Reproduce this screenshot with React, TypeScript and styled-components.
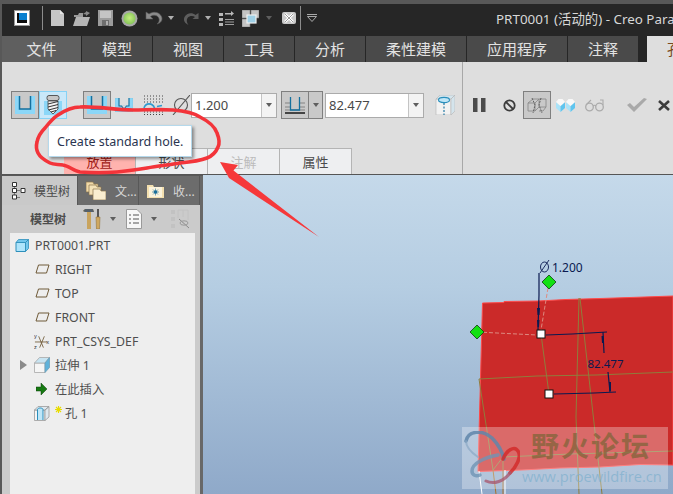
import React from "react";
import styled, { createGlobalStyle } from "styled-components";

const FONT = `"Noto Sans", "Noto Sans CJK SC", sans-serif`;

const GlobalStyle = createGlobalStyle`
  html, body {
    margin: 0;
    padding: 0;
    background: #555;
  }
  #root {
    width: 673px;
    height: 494px;
    overflow: hidden;
  }
`;

const Page = styled.div`
  position: relative;
  box-sizing: border-box;
  width: 673px;
  height: 494px;
  padding: 4px 0 0 2px;
  background: #585858;
  overflow: hidden;
  display: flex;
  flex-direction: column;
  font-family: ${FONT};
`;

const Slot = styled.span<{ $ml?: number }>`
  display: flex;
  align-items: center;
  flex-shrink: 0;
  margin-left: ${(p) => p.$ml ?? 0}px;
`;

const QuickBar = styled.div`
  box-sizing: border-box;
  height: 32px;
  flex-shrink: 0;
  display: flex;
  align-items: center;
  padding: 0 0 4px 12px;
  background: #262626;
`;

const BarSep = styled.span`
  width: 1px;
  height: 24px;
  background: #8c8c8c;
`;

const Title = styled.span`
  flex-shrink: 0;
  margin-left: 179px;
  font-size: 13.4px;
  color: #d8d8d8;
  white-space: nowrap;
`;

const TabBar = styled.div`
  height: 26px;
  flex-shrink: 0;
  display: flex;
  background: #262626;
`;

const MenuTab = styled.div<{ $w: number; $file?: boolean; $active?: boolean }>`
  width: ${(p) => p.$w}px;
  flex-shrink: 0;
  margin-right: 1px;
  overflow: hidden;
  white-space: nowrap;
  display: flex;
  align-items: center;
  justify-content: ${(p) => (p.$active ? "flex-start" : "center")};
  padding: 0 0 2px ${(p) => (p.$active ? 20 : 0)}px;
  box-sizing: border-box;
  font-size: 15px;
  color: ${(p) => (p.$active ? "#7a4a20" : "#e2e2e2")};
  background: ${(p) =>
    p.$active ? "#dedede" : p.$file ? "#5f5f5f" : "#4a4a4a"};
`;

const Ribbon = styled.div`
  height: 112px;
  flex-shrink: 0;
  display: flex;
  background: #dedede;
  border-bottom: 1px solid #555;
`;

const RibbonMain = styled.div`
  width: 460px;
  flex-shrink: 0;
  border-right: 1px solid #a8a8a8;
  display: flex;
  flex-direction: column;
`;

const ToolRow = styled.div`
  display: flex;
  align-items: center;
  height: 28px;
  margin-top: 29px;
  padding-left: 9px;
`;

const ToolButton = styled.div<{ $kind: "pressed" | "hover" }>`
  box-sizing: border-box;
  width: 28px;
  height: 28px;
  display: flex;
  align-items: center;
  justify-content: center;
  border: 1px solid ${(p) => (p.$kind === "hover" ? "#86d2f5" : "#7f7f7f")};
  background: ${(p) => (p.$kind === "hover" ? "#c9e8f9" : "#c9c9c9")};
`;

const Combo = styled.div<{ $w: number }>`
  box-sizing: border-box;
  width: ${(p) => p.$w}px;
  height: 25px;
  display: flex;
  border: 1px solid #ababab;
  background: #fff;
`;

const ComboValue = styled.span`
  flex: 1;
  padding-left: 3px;
  font-size: 13px;
  line-height: 23px;
  color: #484848;
`;

const ComboDrop = styled.span`
  width: 14px;
  display: flex;
  align-items: center;
  justify-content: center;
  border-left: 1px solid #c4c4c4;
  background: #f3f3f3;
`;

const Caret = styled.span<{ $color?: string }>`
  width: 0;
  height: 0;
  border-left: 3.5px solid transparent;
  border-right: 3.5px solid transparent;
  border-top: 4px solid ${(p) => p.$color ?? "#5e5e5e"};
`;

const SplitButton = styled.div`
  box-sizing: border-box;
  width: 42px;
  height: 28px;
  display: flex;
  border: 1px solid #7f7f7f;
  background: #c9c9c9;
`;

const SplitMain = styled.span`
  width: 26px;
  display: flex;
  align-items: center;
  justify-content: center;
  border-right: 1px solid #7f7f7f;
`;

const SplitDrop = styled.span`
  flex: 1;
  display: flex;
  align-items: center;
  justify-content: center;
`;

const SubTabs = styled.div`
  margin-top: auto;
  height: 26px;
  padding-left: 62px;
  display: flex;
`;

const SubTab = styled.div<{ $state?: "error" | "off" }>`
  box-sizing: border-box;
  width: 72px;
  display: flex;
  align-items: center;
  justify-content: center;
  font-size: 13px;
  border: 1px solid #b4b4b4;
  border-bottom: none;
  border-left-width: 0;
  background: ${(p) => (p.$state === "error" ? "#ffb3ae" : "#eeeff1")};
  color: ${(p) =>
    p.$state === "error" ? "#a11a14" : p.$state === "off" ? "#bcbcbc" : "#4a4a4a"};
`;

const RibbonSide = styled(ToolRow)`
  padding-left: 0;
`;

const Body = styled.div`
  flex: 1;
  min-height: 0;
  display: flex;
`;

const Panel = styled.div`
  width: 198px;
  flex-shrink: 0;
  margin-top: 1px;
  display: flex;
  flex-direction: column;
  background: #cbcbcb;
  border-right: 3px solid #686868;
`;

const PanelTabs = styled.div`
  height: 29px;
  flex-shrink: 0;
  display: flex;
  background: #585858;
`;

const PanelTab = styled.div<{ $w: number; $active?: boolean }>`
  box-sizing: border-box;
  width: ${(p) => p.$w}px;
  margin-right: 1px;
  display: flex;
  align-items: center;
  font-size: 12px;
  padding-left: ${(p) => (p.$active ? 10 : 8)}px;
  gap: ${(p) => (p.$active ? 8 : 9)}px;
  background: ${(p) => (p.$active ? "#c9c9c9" : "#6c6c6c")};
  color: ${(p) => (p.$active ? "#4a4a4a" : "#d6d6d6")};
`;

const PanelTools = styled.div`
  height: 28px;
  flex-shrink: 0;
  display: flex;
  align-items: center;
  padding-left: 28px;
`;

const PanelLabel = styled.span`
  font-size: 12px;
  font-weight: 700;
  color: #4c4c4c;
`;

const Tree = styled.div`
  flex: 1;
  margin: 0 5px 0 8px;
  background: #eeeeee;
`;

const TreeRow = styled.div<{ $root?: boolean }>`
  height: 24px;
  display: flex;
  align-items: center;
  padding-left: ${(p) => (p.$root ? 5 : 24)}px;
  gap: ${(p) => (p.$root ? 6 : 5)}px;
  font-size: 12.3px;
  color: #4e4e4e;
`;

const ExpandRow = styled(TreeRow)`
  padding-left: 10px;
`;

const TreeIcon = styled.span<{ $w: number }>`
  width: ${(p) => p.$w}px;
  display: flex;
  justify-content: center;
  flex-shrink: 0;
`;

const Expander = styled.span`
  width: 0;
  height: 0;
  margin-right: 2px;
  border-top: 5px solid transparent;
  border-bottom: 5px solid transparent;
  border-left: 7px solid #8a8a8a;
`;

const NewMark = styled.svg`
  flex-shrink: 0;
  margin: -8px -2px 0 0;
`;

const Canvas = styled.div`
  position: relative;
  flex: 1;
  overflow: hidden;
  background: linear-gradient(180deg, #c5d9ea 0%, #b5cde2 35%, #8fa9c9 100%);
`;

const Scene = styled.svg`
  position: absolute;
  inset: 0;
  width: 100%;
  height: 100%;
`;

const Watermark = styled.div`
  position: absolute;
  left: 259px;
  top: 252px;
  width: 206px;
  height: 62px;
  display: flex;
  background: rgba(255, 255, 255, 0.3);
`;

const LogoSvg = styled.svg`
  flex-shrink: 0;
  margin: 4px 0 0 2px;
`;

const MarkText = styled.div`
  margin-left: 2px;
  display: flex;
  flex-direction: column;
`;

const MarkName = styled.span`
  margin-left: 9px;
  font-size: 28px;
  line-height: 36px;
  font-weight: 700;
  letter-spacing: 2px;
  white-space: nowrap;
  color: rgba(125, 100, 55, 0.72);
  font-family: "Noto Sans CJK SC", sans-serif;
`;

const MarkUrl = styled.span`
  margin-top: 3px;
  font-size: 14.6px;
  line-height: 20px;
  white-space: nowrap;
  color: rgba(125, 175, 205, 0.7);
  font-family: "Open Sans", sans-serif;
`;

const Tooltip = styled.div`
  position: absolute;
  left: 48px;
  top: 125px;
  box-sizing: border-box;
  width: 144px;
  height: 32px;
  padding-left: 8px;
  display: flex;
  align-items: center;
  font-size: 12.5px;
  white-space: nowrap;
  color: #2a3550;
  background: #fff;
  border: 1px solid #b5d9ec;
  box-shadow: 2px 2px 3px rgba(0, 0, 0, 0.4);
`;

const Markup = styled.svg`
  position: absolute;
  left: 0;
  top: 0;
  width: 673px;
  height: 494px;
  pointer-events: none;
`;

const HoleIcon = () => (
  <svg width="20" height="18" viewBox="0 0 20 18">
    <path d="M0 0H4.5V13H15.5V0H20V18H0Z" fill="#8bd7f8" />
    <path d="M4.5 0V13H15.5V0" fill="none" stroke="#14709e" strokeWidth="1.5" />
  </svg>
);

const ScrewIcon = () => (
  <svg width="18" height="20" viewBox="0 0 18 20">
    <path d="M0 6H18V20H0Z" fill="#8bd7f8" />
    <path d="M4 6H14V14L9 19L4 14Z" fill="#f4f4f4" stroke="#444" strokeWidth="0.8" />
    <rect x="3" y="0.5" width="12" height="5" rx="2" fill="#c6c6c6" stroke="#4a4a4a" strokeWidth="0.9" />
    <path d="M4 9L14 6.5M4 12L14 9.5M4.5 15L14 12.5M7 17L12 15.5" stroke="#333" strokeWidth="1" />
  </svg>
);

const BlindIcon = () => (
  <svg width="18" height="14" viewBox="0 0 18 14">
    <path d="M0 0H4V8H14V0H18V14H0Z" fill="#8bd7f8" stroke="#7fbcd8" strokeWidth="0.5" />
    <path d="M6.5 8L9 11L11.5 8Z" fill="#dedede" />
    <path d="M4 0V8H6.5L9 11L11.5 8H14V0" fill="none" stroke="#14709e" strokeWidth="1.1" />
  </svg>
);

const DottedIcon = () => (
  <svg width="20" height="20" viewBox="0 0 20 20">
    <path
      d="M1 1H20M1 4H20M1 7H20M1 14H20M1 17H20M1 19.5H20"
      stroke="#444"
      strokeWidth="1"
      strokeDasharray="1 2"
    />
    <path d="M1 13C2.5 7.5 9.5 7.5 11.5 13" fill="none" stroke="#2f9bd0" strokeWidth="1.6" />
    <path d="M14 11.5L19 10.5" stroke="#2f9bd0" strokeWidth="1.3" />
  </svg>
);

const DiameterIcon = () => (
  <svg width="18" height="20" viewBox="0 0 18 20">
    <circle cx="9" cy="10" r="6.5" fill="none" stroke="#555" strokeWidth="1.1" />
    <path d="M1 20L18 0" stroke="#555" strokeWidth="1.1" />
  </svg>
);

const DepthIcon = () => (
  <svg width="20" height="20" viewBox="0 0 20 20">
    <path d="M0 8H5M15 8H20M0 12H5M15 12H20M0 15H20" stroke="#9a9a9a" strokeWidth="1.4" />
    <path d="M0 18H20" stroke="#444" strokeWidth="2" />
    <path d="M5.5 2V15H14.5V2" fill="none" stroke="#14709e" strokeWidth="1.3" />
  </svg>
);

const CubeHoleIcon = () => (
  <svg width="20" height="20" viewBox="0 0 20 20">
    <path d="M1 4H16V20H1Z" fill="#f2f2f2" stroke="#bcbcbc" strokeWidth="0.7" />
    <path d="M1 4L5 0H20L16 4ZM16 4L20 0V16L16 20Z" fill="#d4e4ec" stroke="#bcbcbc" strokeWidth="0.7" />
    <ellipse cx="9" cy="5" rx="5.5" ry="2.6" fill="#bfe6f7" stroke="#2a8fbc" strokeWidth="1.1" />
    <path d="M9 8V20" stroke="#14709e" strokeWidth="1.1" strokeDasharray="2 1.5" />
  </svg>
);

const PauseIcon = () => (
  <svg width="13" height="14" viewBox="0 0 13 14">
    <path d="M0 0H4.5V14H0ZM8 0H12.5V14H8Z" fill="#4a4a4a" />
  </svg>
);

const StopIcon = () => (
  <svg width="13" height="13" viewBox="0 0 13 13">
    <circle cx="6.5" cy="6.5" r="5.2" fill="none" stroke="#3c3c3c" strokeWidth="1.8" />
    <path d="M3 3L10 10" stroke="#3c3c3c" strokeWidth="1.8" />
  </svg>
);

const MeshIcon = () => (
  <svg width="20" height="17" viewBox="0 0 20 17">
    <path
      d="M1 6L6 2H12L8 6H1V14H8V6M8 14L12 10V2M12 2H19V10H12M19 10L16 14H12"
      fill="none"
      stroke="#858585"
      strokeWidth="0.8"
    />
    <path d="M5 1L8 8L6 16M14 1L12 8L15 16" fill="none" stroke="#555" strokeWidth="0.9" strokeDasharray="2 1" />
  </svg>
);

const BookIcon = () => (
  <svg width="19" height="13" viewBox="0 0 19 13">
    <g id="book-half">
      <path d="M0 3L4.5 7V13L0 9Z" fill="#a9e3f9" />
      <path d="M4.5 7L9 3V9L4.5 13Z" fill="#5fc5ef" />
      <path d="M0 3L2.5 0H6.5L9 3L4.5 7Z" fill="#f8f8f8" />
    </g>
    <path d="M10 3L14.5 7V13L10 9Z" fill="#a9e3f9" />
    <path d="M14.5 7L19 3V9L14.5 13Z" fill="#5fc5ef" />
    <path d="M10 3L12.5 0H16.5L19 3L14.5 7Z" fill="#f8f8f8" />
  </svg>
);

const GlassesIcon = () => (
  <svg width="20" height="13" viewBox="0 0 20 13">
    <circle cx="4.5" cy="8" r="3.8" fill="none" stroke="#ababab" strokeWidth="1.3" />
    <circle cx="14.5" cy="8" r="3.8" fill="none" stroke="#ababab" strokeWidth="1.3" />
    <path d="M8 7C9 6 10 6 11 7M1 6L6 1M18 6V1H15" fill="none" stroke="#ababab" strokeWidth="1.1" />
  </svg>
);

const CheckIcon = () => (
  <svg width="20" height="14" viewBox="0 0 20 14">
    <path d="M0 7L3 5L7 9L17 0L20 1L7 14Z" fill="#a9a9a9" />
  </svg>
);

const CloseIcon = () => (
  <svg width="12" height="11" viewBox="0 0 12 11">
    <path d="M1 1L11 10M11 1L1 10" stroke="#3d3d3d" strokeWidth="2.6" />
  </svg>
);

const PlaneIcon = () => (
  <svg width="15" height="10" viewBox="0 0 15 10">
    <path d="M3.5 1H14L11.5 9H1Z" fill="none" stroke="#6f5a38" strokeWidth="1" />
  </svg>
);

const CsysIcon = () => (
  <svg width="17" height="17" viewBox="0 0 17 17">
    <path d="M5 3L10 15M11 3L6 15M1 9H14" stroke="#6f5a38" strokeWidth="0.9" fill="none" />
    <text x="0" y="5" fontSize="6" fill="#333" fontFamily="Liberation Sans">y</text>
    <text x="0" y="16" fontSize="6" fill="#333" fontFamily="Liberation Sans">z</text>
    <text x="13" y="11" fontSize="6" fill="#333" fontFamily="Liberation Sans">x</text>
  </svg>
);

const PartIcon = () => (
  <svg width="14" height="13" viewBox="0 0 14 13">
    <path d="M1 3.5H10.5V12.5H1Z" fill="#aee4fb" stroke="#2d8fbb" strokeWidth="1" />
    <path d="M1 3.5L3.5 0.5H13.5L10.5 3.5ZM10.5 3.5L13.5 0.5V9.5L10.5 12.5Z" fill="#72c6ec" stroke="#2d8fbb" strokeWidth="0.8" />
  </svg>
);

const ExtrudeIcon = () => (
  <svg width="16" height="16" viewBox="0 0 16 16">
    <path d="M0.5 6H11V15.5H0.5Z" fill="#f5f5f5" stroke="#a8a8a8" strokeWidth="0.8" />
    <path d="M0.5 6L5.5 0.5H15.5L11 6Z" fill="#c7e4f2" stroke="#a8a8a8" strokeWidth="0.8" />
    <path d="M11 6L15.5 0.5V10.5L11 15.5Z" fill="#5fb2da" stroke="#6f9fb8" strokeWidth="0.8" />
  </svg>
);

const InsertIcon = () => (
  <svg width="12" height="12" viewBox="0 0 12 12">
    <path d="M0 4H5V0L11 6L5 12V8H0Z" fill="#167a12" stroke="#0f3f0c" strokeWidth="0.5" />
  </svg>
);

const HoleFeatureIcon = () => (
  <svg width="16" height="15" viewBox="0 0 16 15">
    <path d="M0.5 4H11V14.5H0.5Z" fill="#f4f4f4" stroke="#9a9a9a" strokeWidth="0.8" />
    <path d="M0.5 4L4 0.5H15L11 4ZM11 4L15 0.5V11L11 14.5Z" fill="#dfe8ee" stroke="#9a9a9a" strokeWidth="0.8" />
    <path d="M3.5 14V3.5C3.5 1.5 9 1.5 9 3.5V14" fill="#bfe6f7" stroke="#2a8fbc" strokeWidth="1" />
  </svg>
);

const TreeNodesIcon = () => (
  <svg width="14" height="18" viewBox="0 0 14 18">
    <path d="M2.5 2V15.5H8M2.5 8.5H8" fill="none" stroke="#666" strokeWidth="0.8" />
    <path d="M0.5 0.5H4.5V4.5H0.5ZM0.5 6.5H4.5V10.5H0.5ZM0.5 13H4.5V17H0.5ZM9 6.5H13V10.5H9Z" fill="#fff" stroke="#333" strokeWidth="1" />
  </svg>
);

const FoldersIcon = () => (
  <svg width="20" height="19" viewBox="0 0 20 19">
    <path d="M0 1H7L8 3H12V11H0Z" fill="#f0d9a8" stroke="#8a744c" strokeWidth="0.7" />
    <path d="M3 4H10L11 6H15V14H3Z" fill="#f4e2b8" stroke="#8a744c" strokeWidth="0.7" />
    <path d="M7 8H14L15 10H20V19H7Z" fill="#faeed0" stroke="#8a744c" strokeWidth="0.7" />
  </svg>
);

const FavFolderIcon = () => (
  <svg width="17" height="14" viewBox="0 0 17 14">
    <path d="M0 1H6L7 3H17V14H0Z" fill="#f3dfae" />
    <rect x="2" y="3" width="13" height="10" fill="#fbf3dc" />
    <circle cx="8.5" cy="8" r="1.8" fill="#1c6f9c" />
    <path d="M8.5 4.5V11.5M5 8H12M6 5.5L11 10.5M11 5.5L6 10.5" stroke="#1c6f9c" strokeWidth="0.6" />
  </svg>
);

const HammerIcon = () => (
  <svg width="18" height="20" viewBox="0 0 18 20">
    <path d="M0 2L2 0H10L11 3H8L8 20H4V3H2Z" fill="#c9a45e" />
    <path d="M0 2L2 0H10L11 3H2Z" fill="#55606a" />
    <path d="M14 0H16V8H14Z" fill="#555" />
    <path d="M13 8H17L16.5 20H13.5Z" fill="#cfa860" stroke="#8a6a30" strokeWidth="0.5" />
  </svg>
);

const ListIcon = () => (
  <svg width="16" height="20" viewBox="0 0 16 20">
    <path d="M0.5 0.5H11L15.5 5V19.5H0.5Z" fill="#f7f7f7" stroke="#9a9a9a" />
    <path d="M3 6H5M7 6H13M3 10H5M7 10H13M3 14H5M7 14H13" stroke="#555" strokeWidth="1.2" />
  </svg>
);

const FilterIcon = () => (
  <svg width="20" height="20" viewBox="0 0 20 20">
    <path d="M1 1H5V5H1ZM1 8H5V12H1ZM1 15H5V19H1Z" fill="#c2c2c2" />
    <path d="M8 1H18V11M8 1V9M13 1V8" fill="none" stroke="#c2c2c2" strokeWidth="1" />
    <path d="M9 10L19 19" stroke="#8a8a8a" strokeWidth="1" />
    <ellipse cx="14" cy="14" rx="4" ry="2.2" fill="none" stroke="#9a9a9a" />
  </svg>
);

const DocIcon = () => (
  <svg width="13" height="16" viewBox="0 0 13 16">
    <path d="M0 0H9L13 4V16H0Z" fill="#c6c6c6" />
    <path d="M9 0L13 4H9Z" fill="#e6e6e6" />
  </svg>
);

const OpenIcon = () => (
  <svg width="17" height="15" viewBox="0 0 17 15">
    <path d="M1 4H5L6 2H10V6H1Z" fill="#9a9a9a" />
    <path d="M3 6H17L14 15H0Z" fill="#b5b5b5" />
    <path d="M10 3L13 1V0L17 2L13 5V3.5Z" fill="#8a8a8a" />
  </svg>
);

const SaveIcon = () => (
  <svg width="15" height="16" viewBox="0 0 15 16">
    <path d="M0 0H15V16H0Z" fill="#9c9c9c" />
    <path d="M2 1H13V8H2Z" fill="#c4c4c4" />
    <path d="M4 10H11V16H4Z" fill="#6e6e6e" />
    <path d="M8 11H10V15H8Z" fill="#b0b0b0" />
  </svg>
);

const RegenIcon = () => (
  <svg width="17" height="17" viewBox="0 0 17 17">
    <defs>
      <radialGradient id="regen" cx="0.5" cy="0.45" r="0.55">
        <stop offset="0" stopColor="#c4ee7e" />
        <stop offset="1" stopColor="#86c45a" />
      </radialGradient>
    </defs>
    <circle cx="8.5" cy="8.5" r="8" fill="#a8a8a8" />
    <circle cx="8.5" cy="8.5" r="6" fill="url(#regen)" />
  </svg>
);

const UndoIcon = () => (
  <svg width="18" height="14" viewBox="0 0 18 14">
    <path d="M1 1V8H8L5.5 5.5C8 3.5 12 4 13.5 6.5C15 9 14 11.5 12 13C16 12 18 9 16.5 5.5C14.5 1 8.5 0 4 3Z" fill="#8c8c8c" stroke="#5a5a5a" strokeWidth="0.6" />
  </svg>
);

const RedoIcon = () => (
  <svg width="16" height="13" viewBox="0 0 16 13">
    <path d="M15.5 1V7H9.5L12 5C10 3.5 6.5 3.5 4.5 6C3 8.5 4 11 5.5 13C2 11.5 0 8.5 1.5 5C3.5 1 9 0 12.5 3Z" fill="#5e5e5e" />
  </svg>
);

const SwitchListIcon = () => (
  <svg width="15" height="17" viewBox="0 0 15 17">
    <path d="M0 3H4V6H0ZM0 8H4V11H0ZM0 13H4V16H0Z" fill="#b8b8b8" />
    <path d="M6 9.5H15M6 12H15M6 14.5H15" stroke="#9e9e9e" strokeWidth="1" />
    <path d="M6 3H12V1L15 3.5L12 6V4.5H6Z" fill="#b8b8b8" />
  </svg>
);

const WindowsIcon = () => (
  <svg width="17" height="17" viewBox="0 0 17 17">
    <path d="M0 0H8V8H0ZM9 0H17V8H9ZM0 9H8V17H0Z" fill="#c4c4c4" stroke="#7a7a7a" strokeWidth="0.6" />
    <rect x="5" y="5" width="9" height="8" fill="#9fd0e6" stroke="#f0f0f0" strokeWidth="1.2" />
  </svg>
);

const CloseWindowIcon = () => (
  <svg width="14" height="12" viewBox="0 0 14 12">
    <rect width="14" height="12" rx="2" fill="#c8c8c8" />
    <path d="M3 2L11 10M11 2L3 10" stroke="#fff" strokeWidth="2.6" />
    <path d="M3 2L11 10M11 2L3 10" stroke="#555" strokeWidth="0.6" />
  </svg>
);

const CustomizeIcon = () => (
  <svg width="10" height="8" viewBox="0 0 10 8">
    <path d="M0 0.5H10" stroke="#aaa" />
    <path d="M0.5 2.5H9.5L5 7.5Z" fill="none" stroke="#aaa" />
  </svg>
);

const Diamond = ({ x, y }: { x: number; y: number }) => (
  <path
    d={`M${x} ${y - 7}L${x + 7} ${y}L${x} ${y + 7}L${x - 7} ${y}Z`}
    fill="#12e012"
    stroke="#123a12"
    strokeWidth="0.8"
  />
);

const Handle = ({ x, y }: { x: number; y: number }) => (
  <rect x={x - 4} y={y - 4} width="8" height="8" fill="#fff" stroke="#111" strokeWidth="1" />
);

const PartScene = () => (
  <Scene viewBox="203 175 470 319">
    <path
      d="M482.5 303L504 302.5L504 301.5L538 301L566 299.5L600 298.5L630 297.5L673 296V465L640 464.5L600 467L560 468L522 470L478 471.5Z"
      fill="#cb2a29"
      stroke="#ff4a4a"
      strokeWidth="1"
    />
    <g fill="none" stroke="#8f7d3c" strokeWidth="1">
      <path d="M479 379L537 376L596 375L673 372" />
      <path d="M479 379L493 470L503 457L570 454L673 451" />
      <path d="M580 298L602 494" />
      <path d="M579 298L576 417L579 494" />
      <path d="M541 334L549 394" />
      <path d="M503 457V470" />
    </g>
    <path d="M493 470L496 494M503 470V494" fill="none" stroke="#a8702a" strokeWidth="1" />
    <path d="M477 332L537 335M548 288L541 330" fill="none" stroke="#dd8a80" strokeWidth="1" strokeDasharray="4 2" />
    <path d="M479 471L482 494M505 470V494" fill="none" stroke="#fff" strokeWidth="1" />
    <g fill="none" stroke="#0b1a50" strokeWidth="1.2">
      <path d="M539 273V295L538 330" />
      <path d="M546 335L572 334L607 332" />
      <path d="M603 332L604 353" />
      <path d="M608 372L610 392" />
      <path d="M554 394L594 393L616 392" />
    </g>
    <path d="M537 308L540 308L539.5 315L537.5 315ZM537 320L539.5 320L539 327L537.5 327ZM601.5 336L603.5 336L604 343L602 343ZM609 382L611 382L611 391L609.5 391Z" fill="#0b1a50" />
    <ellipse cx="544.5" cy="267" rx="4" ry="5" fill="none" stroke="#0b1a50" strokeWidth="0.9" />
    <path d="M540 273L549 260" stroke="#0b1a50" strokeWidth="0.9" />
    <text x="552" y="272" fontSize="12" fill="#0b1a50" fontFamily="Noto Sans">1.200</text>
    <text x="587.5" y="368" fontSize="11.5" fill="#0b1a50" fontFamily="Noto Sans">82.477</text>
    <Diamond x={549} y={282} />
    <Diamond x={477} y={332} />
    <Handle x={541} y={334} />
    <Handle x={549} y={394} />
  </Scene>
);

const MarkLogo = () => (
  <LogoSvg width="56" height="56" viewBox="0 0 56 56">
    <g fill="none" strokeLinecap="round">
      <path d="M2 10C4 0 18 -2 28 7C34 13 38 20 40 28" stroke="#5f86aa" strokeWidth="3.5" opacity="0.85" />
      <path d="M2 10C2 16 8 22 14 26" stroke="#8aa8c4" strokeWidth="2" opacity="0.7" />
      <path d="M39 28C42 20 50 14 54 20C58 26 52 36 46 42" stroke="#d22c2c" strokeWidth="3.5" opacity="0.85" />
      <path d="M46 42C40 50 30 54 22 50" stroke="#a85a70" strokeWidth="3" opacity="0.8" />
      <path d="M34 24C22 26 8 32 8 40C8 44 12 46 16 44" stroke="#6f94b4" strokeWidth="3.5" opacity="0.8" />
    </g>
  </LogoSvg>
);

const menuTabs: [string, number][] = [
  ["模型", 70],
  ["视图", 70],
  ["工具", 70],
  ["分析", 70],
  ["柔性建模", 100],
  ["应用程序", 100],
  ["注释", 70],
];

const datumRows = ["RIGHT", "TOP", "FRONT"];

export default function App() {
  return (
    <Page>
      <GlobalStyle />
      <QuickBar>
        <Slot>
          <svg width="16" height="16" viewBox="0 0 16 16">
            <rect x="0.5" y="0.5" width="15" height="15" fill="#fff" stroke="#999" />
            <path d="M3 3H13V13H3Z" fill="#0d0d0d" />
            <path d="M5 3H13V10H5Z" fill="#0a80d0" />
          </svg>
        </Slot>
        <Slot $ml={12}><BarSep /></Slot>
        <Slot $ml={8}><DocIcon /></Slot>
        <Slot $ml={9}><OpenIcon /></Slot>
        <Slot $ml={8}><SaveIcon /></Slot>
        <Slot $ml={8}><RegenIcon /></Slot>
        <Slot $ml={7}><UndoIcon /></Slot>
        <Slot $ml={5}><Caret $color="#b0b0b0" /></Slot>
        <Slot $ml={9}><RedoIcon /></Slot>
        <Slot $ml={6}><Caret $color="#b0b0b0" /></Slot>
        <Slot $ml={8}><SwitchListIcon /></Slot>
        <Slot $ml={8}><WindowsIcon /></Slot>
        <Slot $ml={7}><Caret $color="#5e5e5e" /></Slot>
        <Slot $ml={10}><CloseWindowIcon /></Slot>
        <Slot $ml={4}><BarSep /></Slot>
        <Slot $ml={6}><CustomizeIcon /></Slot>
        <Title>PRT0001 (活动的) - Creo Para</Title>
      </QuickBar>

      <TabBar>
        <MenuTab $w={79} $file>文件</MenuTab>
        {menuTabs.map(([label, width]) => (
          <MenuTab key={label} $w={width}>{label}</MenuTab>
        ))}
        <Slot $ml={8} />
        <MenuTab $w={26} $active>孔</MenuTab>
      </TabBar>

      <Ribbon>
        <RibbonMain>
          <ToolRow>
            <ToolButton $kind="pressed"><HoleIcon /></ToolButton>
            <ToolButton $kind="hover"><ScrewIcon /></ToolButton>
            <Slot $ml={16}>
              <ToolButton $kind="pressed"><HoleIcon /></ToolButton>
            </Slot>
            <Slot $ml={4}><BlindIcon /></Slot>
            <Slot $ml={10}><DottedIcon /></Slot>
            <Slot $ml={9}><DiameterIcon /></Slot>
            <Slot $ml={1}>
              <Combo $w={86}>
                <ComboValue>1.200</ComboValue>
                <ComboDrop><Caret /></ComboDrop>
              </Combo>
            </Slot>
            <Slot $ml={4}>
              <SplitButton>
                <SplitMain><DepthIcon /></SplitMain>
                <SplitDrop><Caret /></SplitDrop>
              </SplitButton>
            </Slot>
            <Slot $ml={2}>
              <Combo $w={99}>
                <ComboValue>82.477</ComboValue>
                <ComboDrop><Caret /></ComboDrop>
              </Combo>
            </Slot>
            <Slot $ml={11}><CubeHoleIcon /></Slot>
          </ToolRow>
          <SubTabs>
            <SubTab $state="error">放置</SubTab>
            <SubTab>形状</SubTab>
            <SubTab $state="off">注解</SubTab>
            <SubTab>属性</SubTab>
          </SubTabs>
        </RibbonMain>
        <RibbonSide>
          <Slot $ml={10}><PauseIcon /></Slot>
          <Slot $ml={17}><StopIcon /></Slot>
          <Slot $ml={7}>
            <ToolButton $kind="pressed"><MeshIcon /></ToolButton>
          </Slot>
          <Slot $ml={5}><BookIcon /></Slot>
          <Slot $ml={10}><GlassesIcon /></Slot>
          <Slot $ml={22}><CheckIcon /></Slot>
          <Slot $ml={11}><CloseIcon /></Slot>
        </RibbonSide>
      </Ribbon>

      <Body>
        <Panel>
          <PanelTabs>
            <PanelTab $w={75} $active>
              <TreeNodesIcon />
              模型树
            </PanelTab>
            <PanelTab $w={60}>
              <FoldersIcon />
              文...
            </PanelTab>
            <PanelTab $w={60}>
              <FavFolderIcon />
              收...
            </PanelTab>
          </PanelTabs>
          <PanelTools>
            <PanelLabel>模型树</PanelLabel>
            <Slot $ml={17}><HammerIcon /></Slot>
            <Slot $ml={9}><Caret /></Slot>
            <Slot $ml={10}><ListIcon /></Slot>
            <Slot $ml={9}><Caret /></Slot>
            <Slot $ml={13}><FilterIcon /></Slot>
          </PanelTools>
          <Tree>
            <TreeRow $root>
              <TreeIcon $w={14}><PartIcon /></TreeIcon>
              PRT0001.PRT
            </TreeRow>
            {datumRows.map((name) => (
              <TreeRow key={name}>
                <TreeIcon $w={16}><PlaneIcon /></TreeIcon>
                {name}
              </TreeRow>
            ))}
            <TreeRow>
              <TreeIcon $w={16}><CsysIcon /></TreeIcon>
              PRT_CSYS_DEF
            </TreeRow>
            <ExpandRow>
              <Expander />
              <TreeIcon $w={16}><ExtrudeIcon /></TreeIcon>
              拉伸 1
            </ExpandRow>
            <TreeRow>
              <TreeIcon $w={16}><InsertIcon /></TreeIcon>
              在此插入
            </TreeRow>
            <TreeRow>
              <TreeIcon $w={16}><HoleFeatureIcon /></TreeIcon>
              <NewMark width="7" height="7" viewBox="0 0 7 7">
                <path d="M3.5 0V7M0 3.5H7M1 1L6 6M6 1L1 6" stroke="#e8dc00" strokeWidth="1.1" />
              </NewMark>
              孔 1
            </TreeRow>
          </Tree>
        </Panel>
        <Canvas>
          <PartScene />
          <Watermark>
            <MarkLogo />
            <MarkText>
              <MarkName>野火论坛</MarkName>
              <MarkUrl>www.proewildfire.cn</MarkUrl>
            </MarkText>
          </Watermark>
        </Canvas>
      </Body>

      <Tooltip>Create standard hole.</Tooltip>
      <Markup viewBox="0 0 673 494">
        <path
          d="M80 107C96 106 115 110 133 110C146 110 160 109 173 110C186 111 194 113 200 117C208 121 215 127 217 133C219 138 220 143 218 147C216 152 212 156 207 158C199 161 190 162 180 163C168 165 158 166 147 168C136 170 127 171 117 172C105 173 92 173 80 172C74 171 69 166 63 165C58 164 54 165 50 163C44 160 40 157 38 153C36 149 36 146 37 142C38 137 41 132 45 128C49 123 53 118 58 115C64 111 72 107 80 107Z"
          fill="none"
          stroke="#f3343a"
          strokeWidth="3.6"
        />
        <path d="M220 162L238 165L233.5 170.5L319 237L229 178Z" fill="#f6383a" />
      </Markup>
    </Page>
  );
}
